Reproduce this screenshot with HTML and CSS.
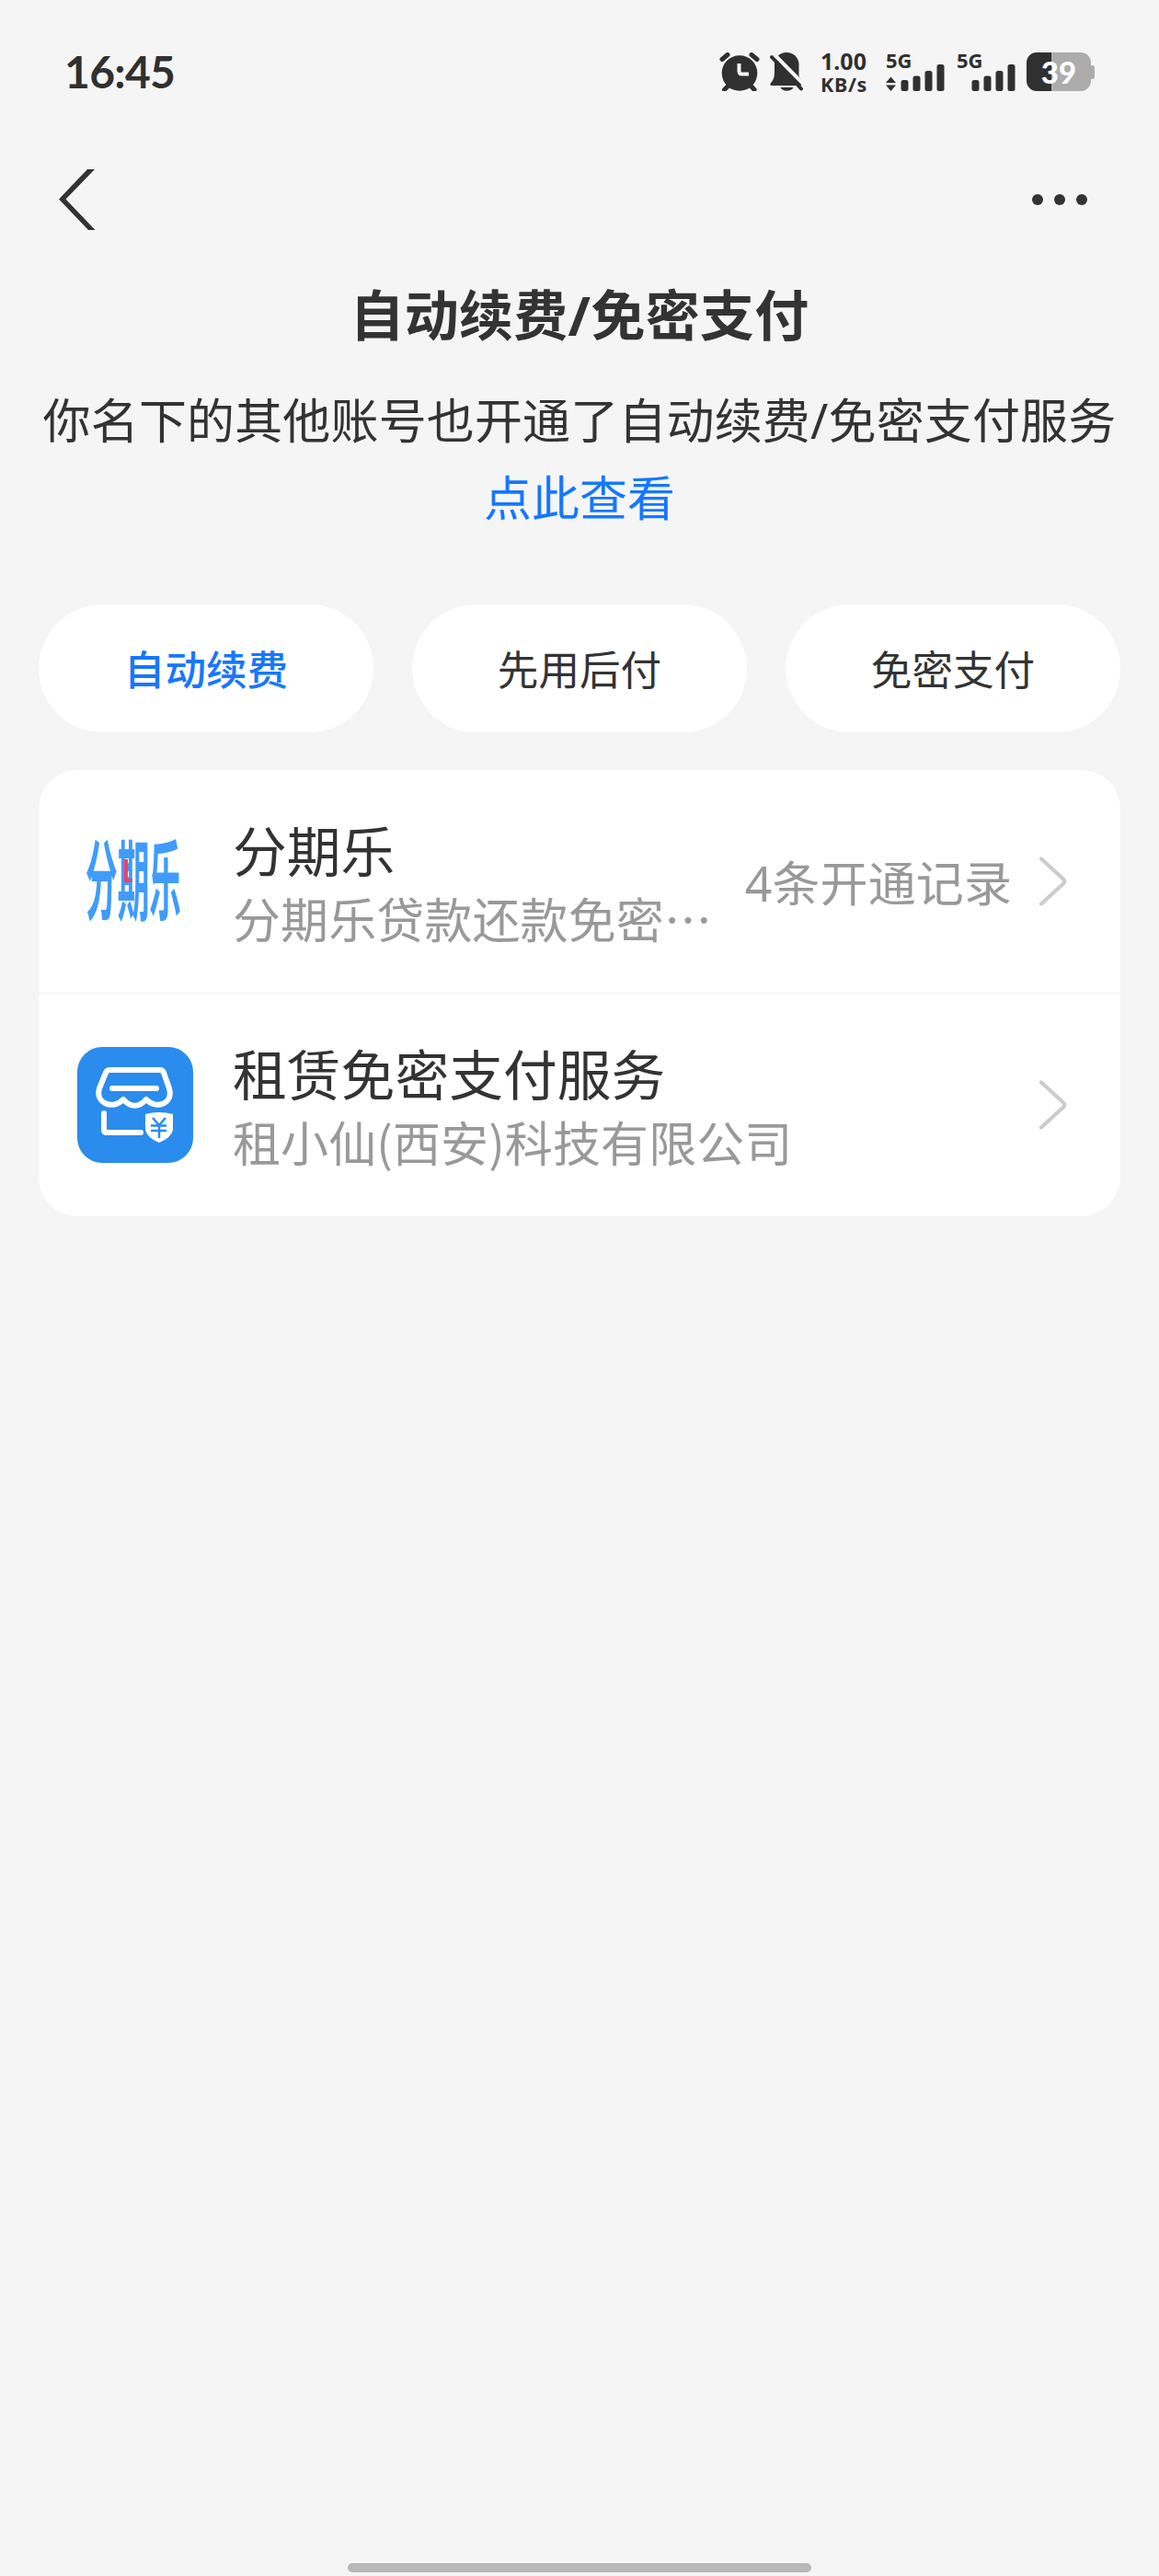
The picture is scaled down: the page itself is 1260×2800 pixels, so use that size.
FILE: index.html
```html
<!DOCTYPE html>
<html lang="zh-CN">
<head>
    <meta charset="UTF-8">
    <meta name="viewport" content="width=device-width, initial-scale=1.0">
    <title>自动续费/免密支付</title>
    <link rel="stylesheet" href="styles.css">
</head>
<body>
    <!-- Status bar -->
    <div class="status-bar">
        <div class="clock">16:45</div>
        <div class="status-icons">
            <svg class="icon-alarm" viewBox="0 0 44 42" width="44" height="42">
                <g stroke="#303030" stroke-width="5" stroke-linecap="round">
                    <path d="M3 7.500L9 2.500M35 2.500l6 5M10 36l-4.500 4.500M34 36l4 4.500"/>
                </g>
                <circle cx="22" cy="22.500" r="19.300" fill="#303030"/>
                <path d="M21.500 12v8q0 3.500 3 3.500H32" fill="none" stroke="#f5f5f5" stroke-width="4"/>
            </svg>
            <svg class="icon-bell" viewBox="0 0 36 42" width="36" height="42">
                <path d="M18 0C25.500 0 31 5.500 31.500 12v12c0 4 4 6 4.500 10.500L33 36H2C0 36 0 34 1.200 33 4 30 5 26 5 22V12C5 5 11 0 18 0z" fill="#303030"/>
                <path d="M11.500 38h14c-2 5-12 5-14 0z" fill="#303030"/>
                <path d="M4 1.500L38 36" stroke="#f5f5f5" stroke-width="4"/>
                <path d="M2 5l32 34.500" stroke="#303030" stroke-width="4" stroke-linecap="round"/>
            </svg>
            <div class="net-speed">
                <span class="speed-value">1.00</span>
                <span class="speed-unit">KB/s</span>
            </div>
            <div class="signal">
                <span class="signal-type">5G</span>
                <svg viewBox="0 0 64 42" width="64" height="42" fill="#303030">
                    <path d="M5.500 26.500l5.500 6.500H0zM0 35.500h11L5.500 42z"/>
                    <rect x="16.500" y="30" width="8" height="12" rx="2.500"/>
                    <rect x="29.500" y="25.500" width="8" height="16.500" rx="2.500"/>
                    <rect x="42.500" y="20" width="8" height="22" rx="2.500"/>
                    <rect x="55.500" y="13" width="8" height="29" rx="2.500"/>
                </svg>
            </div>
            <div class="signal">
                <span class="signal-type">5G</span>
                <svg viewBox="0 0 64 42" width="64" height="42" fill="#303030">
                    <rect x="16.500" y="30" width="8" height="12" rx="2.500"/>
                    <rect x="29.500" y="25.500" width="8" height="16.500" rx="2.500"/>
                    <rect x="42.500" y="20" width="8" height="22" rx="2.500"/>
                    <rect x="55.500" y="13" width="8" height="29" rx="2.500"/>
                </svg>
            </div>
            <div class="battery">
                <div class="battery-body">39</div>
                <div class="battery-cap"></div>
            </div>
        </div>
    </div>

    <!-- Navigation -->
    <div class="nav-bar">
        <svg viewBox="0 0 40 66" width="40" height="66">
            <path d="M31 0h8L7.500 32.500 39.500 66H32L0 32.500z" fill="#333"/>
        </svg>
        <svg viewBox="0 0 60 12" width="60" height="12" fill="#333">
            <circle cx="6" cy="6" r="6"/>
            <circle cx="30" cy="6" r="6"/>
            <circle cx="54" cy="6" r="6"/>
        </svg>
    </div>

    <div class="header">
        <h1 class="page-title">自动续费/免密支付</h1>
        <p class="notice">你名下的其他账号也开通了自动续费/免密支付服务</p>
        <a class="notice-link" href="#">点此查看</a>
    </div>

    <div class="tabs">
        <div class="tab active">自动续费</div>
        <div class="tab">先用后付</div>
        <div class="tab">免密支付</div>
    </div>

    <div class="card">
        <div class="row">
            <svg class="row-logo" viewBox="0 0 126 126">
                <text class="logo-word" transform="translate(9 98) scale(0.365 1)">分期乐</text>
                <path d="M53 39v23h7" fill="none" stroke="#ee4266" stroke-width="4"/>
            </svg>
            <div class="row-text">
                <div class="row-title">分期乐</div>
                <div class="row-desc">分期乐贷款还款免密…</div>
            </div>
            <div class="row-extra">4条开通记录</div>
            <svg class="row-arrow" viewBox="0 0 30 54" width="30" height="54">
                <path d="M2 2.500l24 22q2.500 2.500 0 5l-24 22" fill="none" stroke="#ccc" stroke-width="4.200" stroke-linecap="round"/>
            </svg>
        </div>
        <div class="row">
            <svg class="row-logo" viewBox="0 0 126 126">
                <rect width="126" height="126" rx="27" fill="#2a8cec"/>
                <g fill="none" stroke="#fff" stroke-width="6" stroke-linecap="round" stroke-linejoin="round">
                    <path d="M36 25h54q3 0 4 3l6 17c5 16-14 24-25 12-8 9-17 9-25 0-11 12-31 4-26-12l7-17q1-3 5-3z"/>
                    <path d="M38 45h48M29 72v18q0 3 3 3h37"/>
                </g>
                <path d="M74 73q15-4 30 0v17q-2 9-15 14-13-5-15-14z" fill="#fff"/>
                <path d="M82 77l7 8 7-8M89 85v14M80 85.500h17M80 91h17" fill="none" stroke="#2a8cec" stroke-width="2.500"/>
            </svg>
            <div class="row-text">
                <div class="row-title">租赁免密支付服务</div>
                <div class="row-desc">租小仙(西安)科技有限公司</div>
            </div>
            <svg class="row-arrow" viewBox="0 0 30 54" width="30" height="54">
                <path d="M2 2.500l24 22q2.500 2.500 0 5l-24 22" fill="none" stroke="#ccc" stroke-width="4.200" stroke-linecap="round"/>
            </svg>
        </div>
    </div>

    <div class="home-indicator"></div>
</body>
</html>
```
FILE: styles.css
```css
* {
    margin: 0;
    padding: 0;
    box-sizing: border-box;
}

body {
    font-family: "Noto Sans", "Noto Sans CJK SC", sans-serif;
    background: #f5f5f5;
    color: #333;
    height: 2800px;
    overflow: hidden;
    display: flex;
    flex-direction: column;
}

svg {
    display: block;
    flex-shrink: 0;
}

/* Status bar */
.status-bar {
    height: 156px;
    padding: 0 70px;
    display: flex;
    justify-content: space-between;
    align-items: center;
    color: #303030;
}

.clock {
    font-family: Lato, sans-serif;
    font-size: 48px;
    font-weight: 700;
    line-height: 60px;
    letter-spacing: -0.7px;
}

.status-icons {
    display: flex;
    height: 42px;
}

.icon-bell {
    margin-left: 11px;
}

.net-speed {
    width: 70px;
    padding-left: 19px;
    font-weight: 700;
    white-space: nowrap;
}

.speed-value,
.speed-unit {
    display: block;
}

.speed-value {
    font-size: 25px;
    line-height: 19px;
}

.speed-unit {
    font-size: 21.500px;
    line-height: 31px;
    letter-spacing: 0.7px;
}

.signal {
    position: relative;
    margin-left: 20px;
}

.signal + .signal {
    margin-left: 13px;
}

.signal-type {
    position: absolute;
    top: 0;
    left: 0;
    font-size: 22px;
    font-weight: 700;
    line-height: 17px;
}

.battery {
    display: flex;
    align-items: center;
    margin-left: 12px;
}

.battery-body {
    width: 70px;
    height: 42px;
    border-radius: 11px;
    background: linear-gradient(to right, #303030 27px, #acacac 27px);
    color: #fff;
    font-family: Lato, sans-serif;
    font-size: 33px;
    font-weight: 900;
    line-height: 42px;
    text-align: center;
}

.battery-cap {
    width: 4px;
    height: 15px;
    border-radius: 0 3px 3px 0;
    background: #acacac;
}

/* Navigation */
.nav-bar {
    height: 122px;
    padding: 0 78px 0 64px;
    display: flex;
    justify-content: space-between;
    align-items: center;
}

/* Title and notice */
.header {
    text-align: center;
    padding-top: 22px;
    height: 379px;
}

.page-title {
    font-size: 59px;
    font-weight: 700;
    line-height: 84px;
    letter-spacing: 0.3px;
    margin-bottom: 31px;
}

.notice,
.notice-link {
    font-size: 52px;
    font-weight: 400;
    line-height: 84px;
    white-space: nowrap;
}

.notice {
    letter-spacing: 0.15px;
}

.notice-link {
    display: block;
    color: #1677ff;
    text-decoration: none;
}

/* Tabs */
.tabs {
    display: grid;
    grid-template-columns: repeat(3, 1fr);
    gap: 42px;
    padding: 0 42px;
}

.tab {
    height: 139px;
    padding-top: 1px;
    border-radius: 70px;
    background: #fff;
    font-size: 44.600px;
    line-height: 139px;
    text-align: center;
}

.tab.active {
    color: #1677ff;
    font-weight: 500;
}

/* List */
.card {
    margin: 41px 42px 0;
    background: #fff;
    border-radius: 42px;
}

.row {
    height: 242px;
    padding: 0 58px 0 42px;
    display: flex;
    align-items: center;
}

.row + .row {
    height: 243px;
    border-top: 1px solid #eee;
}

.row-logo {
    width: 126px;
    height: 126px;
    overflow: visible;
}

.logo-word {
    font-family: "Noto Sans CJK SC", sans-serif;
    font-size: 95px;
    font-weight: 700;
    fill: #3f9cfb;
}

.row-text {
    flex: 1;
    margin-left: 43px;
    padding-top: 3px;
    white-space: nowrap;
}

.row-title {
    font-size: 58.800px;
    line-height: 76px;
}

.row-desc {
    font-family: "Noto Sans CJK SC", sans-serif;
    font-size: 52px;
    line-height: 69px;
    letter-spacing: 0.1px;
    color: #999;
}

.row-extra {
    padding-top: 4px;
    font-size: 52px;
    line-height: 74px;
    letter-spacing: 0.1px;
    color: #999;
}

.row-arrow {
    margin-left: 30px;
}

.home-indicator {
    width: 504px;
    height: 10px;
    margin: auto auto 4px;
    border-radius: 5px;
    background: #b8b8b8;
}
```
